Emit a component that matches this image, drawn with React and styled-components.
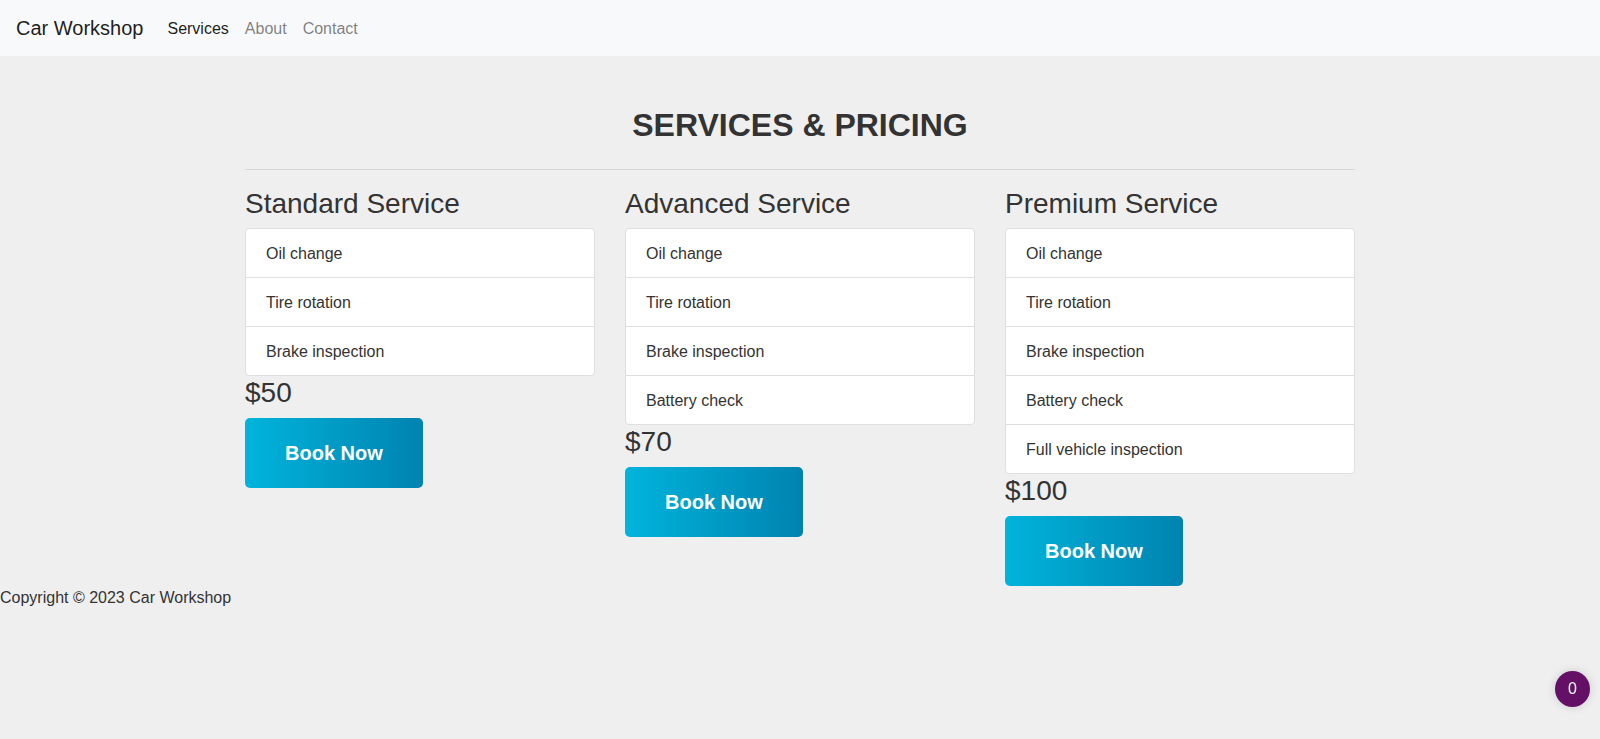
import React from "react";
import styled, { createGlobalStyle } from "styled-components";

const GlobalStyle = createGlobalStyle`
  *, *::before, *::after { box-sizing: border-box; }
  body {
    margin: 0;
    background: #efefef;
    color: #333;
    font-family: "Liberation Sans", Arial, sans-serif;
    font-size: 16px;
    line-height: 24px;
  }
`;

const Navbar = styled.nav`
  display: flex;
  align-items: center;
  padding: 8px 16px;
  background: #f8f9fb;
`;

const Brand = styled.a`
  margin-right: 16px;
  padding: 5px 0;
  font-size: 20px;
  line-height: 30px;
  color: rgba(0, 0, 0, 0.9);
  text-decoration: none;
`;

const NavList = styled.ul`
  display: flex;
  margin: 0;
  padding: 0;
  list-style: none;
`;

const NavLink = styled.a`
  display: block;
  padding: 9px 8px 7px;
  color: ${({ $active }) => ($active ? "rgba(0, 0, 0, 0.9)" : "rgba(0, 0, 0, 0.5)")};
  text-decoration: none;
`;

const Main = styled.main`
  max-width: 1140px;
  margin: 0 auto;
  padding: 50px 15px 0;
`;

const Title = styled.h1`
  margin: 0 0 24px;
  font-size: 32px;
  line-height: 39px;
  font-weight: 700;
  text-align: center;
  text-transform: uppercase;
`;

const Divider = styled.hr`
  margin: 16px 0;
  border: 0;
  border-top: 1px solid rgba(0, 0, 0, 0.1);
`;

const Plans = styled.div`
  display: grid;
  grid-template-columns: repeat(3, 1fr);
  align-items: start;
  gap: 30px;
`;

const PlanHeading = styled.h2`
  margin: 0 0 6px;
  font-size: 28px;
  line-height: 36px;
  font-weight: 400;
`;

const Price = styled.p`
  margin: 0 0 8px;
  font-size: 28px;
  line-height: 34px;
`;

const FeatureList = styled.ul`
  margin: 0;
  padding: 0;
  list-style: none;
  background: #fff;
  border: 1px solid #dfdfdf;
  border-radius: 4px;
`;

const Feature = styled.li`
  padding: 13px 20px 11px;

  & + & {
    border-top: 1px solid #dfdfdf;
  }
`;

const BookButton = styled.button`
  display: block;
  padding: 20px 40px;
  border: 0;
  border-radius: 5px;
  background: linear-gradient(to right, #00b4db, #0083b0);
  color: #fff;
  font: 700 20px/30px "Liberation Sans", Arial, sans-serif;
  cursor: pointer;
`;

const CounterButton = styled.button`
  position: fixed;
  right: 10px;
  bottom: 32px;
  width: 35px;
  height: 36px;
  padding: 0;
  border: 0;
  border-radius: 50%;
  background: #651067;
  color: #fff;
  font: 16px/24px "Liberation Sans", Arial, sans-serif;
  box-shadow: 0 0 10px rgba(0, 0, 0, 0.15);
`;

const links = ["Services", "About", "Contact"];

const plans = [
  { name: "Standard Service", price: "$50", features: ["Oil change", "Tire rotation", "Brake inspection"] },
  { name: "Advanced Service", price: "$70", features: ["Oil change", "Tire rotation", "Brake inspection", "Battery check"] },
  {
    name: "Premium Service",
    price: "$100",
    features: ["Oil change", "Tire rotation", "Brake inspection", "Battery check", "Full vehicle inspection"],
  },
];

export default function App() {
  return (
    <>
      <GlobalStyle />
      <Navbar>
        <Brand href="#">Car Workshop</Brand>
        <NavList>
          {links.map((label, i) => (
            <li key={label}>
              <NavLink href={`#${label.toLowerCase()}`} $active={i === 0}>{label}</NavLink>
            </li>
          ))}
        </NavList>
      </Navbar>
      <Main>
        <Title>Services &amp; Pricing</Title>
        <Divider />
        <Plans>
          {plans.map((plan) => (
            <section key={plan.name}>
              <PlanHeading>{plan.name}</PlanHeading>
              <FeatureList>
                {plan.features.map((feature) => (
                  <Feature key={feature}>{feature}</Feature>
                ))}
              </FeatureList>
              <Price>{plan.price}</Price>
              <BookButton type="button">Book Now</BookButton>
            </section>
          ))}
        </Plans>
      </Main>
      <footer>Copyright © 2023 Car Workshop</footer>
      <CounterButton type="button">0</CounterButton>
    </>
  );
}
